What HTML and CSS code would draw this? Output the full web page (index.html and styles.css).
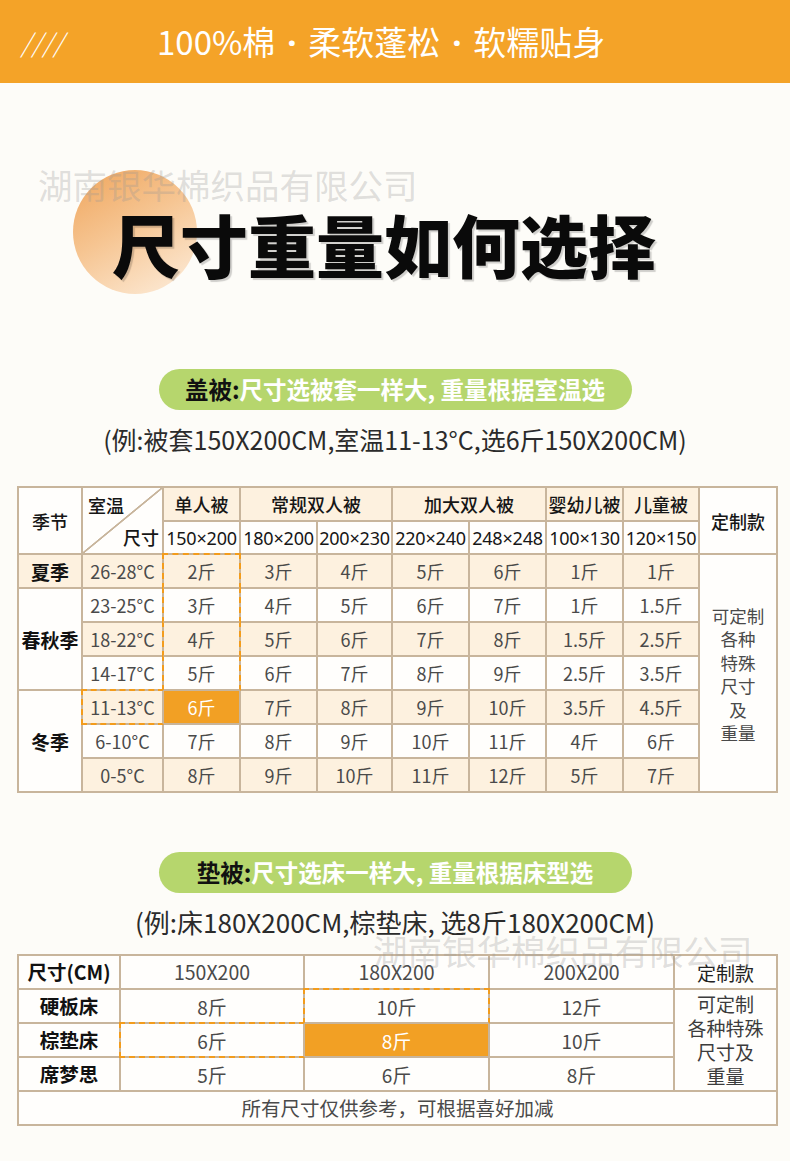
FILE: index.html
```html
<!DOCTYPE html>
<html lang="zh-CN">
<head>
<meta charset="utf-8">
<title>尺寸重量如何选择</title>
<link rel="stylesheet" href="styles.css">
</head>
<body>
<header class="topbar">
  <span class="slashes">////</span>
  <span class="slogan">100%棉<span class="dot">·</span>柔软蓬松<span class="dot">·</span>软糯贴身</span>
</header>

<section class="hero">
  <span class="blob"></span>
  <div class="wm wm1">湖南银华棉织品有限公司</div>
  <h1 class="title">尺寸重量如何选择</h1>
</section>

<section class="block block1">
  <div class="pill"><b>盖被:</b>尺寸选被套一样大, 重量根据室温选</div>
  <p class="example ex1">(例:被套150X200CM,室温11-13°C,选6斤150X200CM)</p>
  <table class="grid t1">
    <colgroup>
      <col class="w64"><col class="w81"><col class="w77"><col class="w77"><col class="w75">
      <col class="w77"><col class="w77"><col class="w77"><col class="w76"><col class="w78">
    </colgroup>
    <tr class="r34">
      <td rowspan="2" class="head">季节</td>
      <td rowspan="2" class="diag"><div class="diag-in"><span class="d-top">室温</span><span class="d-bot">尺寸</span></div></td>
      <td class="c head">单人被</td>
      <td colspan="2" class="c head">常规双人被</td>
      <td colspan="2" class="c head">加大双人被</td>
      <td class="c head">婴幼儿被</td>
      <td class="c head">儿童被</td>
      <td rowspan="2" class="head">定制款</td>
    </tr>
    <tr class="r33">
      <td class="size">150×200</td><td class="size">180×200</td><td class="size">200×230</td>
      <td class="size">220×240</td><td class="size">248×248</td><td class="size">100×130</td><td class="size">120×150</td>
    </tr>
    <tr class="r34 c">
      <td class="season">夏季</td><td>26-28°C</td><td class="hl hl-tlr">2斤</td><td>3斤</td><td>4斤</td><td>5斤</td><td>6斤</td><td>1斤</td><td>1斤</td>
      <td rowspan="7" class="custom">可定制<br>各种<br>特殊<br>尺寸<br>及<br>重量</td>
    </tr>
    <tr class="r34">
      <td rowspan="3" class="season">春秋季</td><td>23-25°C</td><td class="hl hl-lr">3斤</td><td>4斤</td><td>5斤</td><td>6斤</td><td>7斤</td><td>1斤</td><td>1.5斤</td>
    </tr>
    <tr class="r34 c">
      <td>18-22°C</td><td class="hl hl-lr">4斤</td><td>5斤</td><td>6斤</td><td>7斤</td><td>8斤</td><td>1.5斤</td><td>2.5斤</td>
    </tr>
    <tr class="r34">
      <td>14-17°C</td><td class="hl hl-lr">5斤</td><td>6斤</td><td>7斤</td><td>8斤</td><td>9斤</td><td>2.5斤</td><td>3.5斤</td>
    </tr>
    <tr class="r34 c">
      <td rowspan="3" class="season white">冬季</td><td class="hl hl-tlb">11-13°C</td><td class="hi">6斤</td><td>7斤</td><td>8斤</td><td>9斤</td><td>10斤</td><td>3.5斤</td><td>4.5斤</td>
    </tr>
    <tr class="r34">
      <td>6-10°C</td><td>7斤</td><td>8斤</td><td>9斤</td><td>10斤</td><td>11斤</td><td>4斤</td><td>6斤</td>
    </tr>
    <tr class="r34 c">
      <td>0-5°C</td><td>8斤</td><td>9斤</td><td>10斤</td><td>11斤</td><td>12斤</td><td>5斤</td><td>7斤</td>
    </tr>
  </table>
</section>

<section class="block block2">
  <div class="pill"><b>垫被:</b>尺寸选床一样大, 重量根据床型选</div>
  <p class="example ex2">(例:床180X200CM,棕垫床, 选8斤180X200CM)</p>
  <div class="wm wm2">湖南银华棉织品有限公司</div>
  <table class="grid t2">
    <colgroup>
      <col class="w102"><col class="w184"><col class="w185"><col class="w185"><col class="w103">
    </colgroup>
    <tr class="r34">
      <td class="label">尺寸(CM)</td><td class="size2">150X200</td><td class="size2">180X200</td><td class="size2">200X200</td><td class="dz">定制款</td>
    </tr>
    <tr class="r34">
      <td class="label">硬板床</td><td>8斤</td><td class="hl hl-tlr">10斤</td><td>12斤</td>
      <td rowspan="3" class="custom2">可定制<br>各种特殊<br>尺寸及<br>重量</td>
    </tr>
    <tr class="r34">
      <td class="label">棕垫床</td><td class="hl hl-tlb">6斤</td><td class="hi">8斤</td><td>10斤</td>
    </tr>
    <tr class="r34">
      <td class="label">席梦思</td><td>5斤</td><td>6斤</td><td>8斤</td>
    </tr>
    <tr class="r34">
      <td colspan="5" class="note">所有尺寸仅供参考，可根据喜好加减</td>
    </tr>
  </table>
</section>
</body>
</html>
```

FILE: styles.css
```css
* { box-sizing: border-box; }

body {
  margin: 0;
  width: 790px;
  height: 1161px;
  overflow: hidden;
  background: #fdfcf8;
  font-family: "Noto Sans CJK SC", "Noto Sans", sans-serif;
  color: #222;
}

/* ---------- top bar ---------- */
.topbar {
  height: 83px;
  background: #f4a328;
  display: flex;
  align-items: center;
  color: #fff;
}
.slashes {
  width: 157px;
  padding-left: 21px;
  font-size: 26px;
  font-weight: 300;
  font-style: italic;
  letter-spacing: 0.5px;
}
.slogan {
  font-size: 33px;
  font-weight: 400;
  line-height: 1;
  white-space: nowrap;
}
.dot {
  display: inline-block;
  width: 33px;
  text-align: center;
  font-family: "Noto Sans", sans-serif;
  font-weight: 700;
}

/* ---------- hero ---------- */
.hero {
  position: relative;
  height: 286px;
  padding-top: 127px;
  padding-left: 112px;
}
.wm {
  position: absolute;
  font-size: 34.5px;
  line-height: 1;
  font-weight: 400;
  color: rgba(150, 150, 150, 0.3);
  white-space: nowrap;
  z-index: 3;
}
.wm1 { left: 38px; top: 84px; }
.blob {
  position: absolute;
  left: 73px;
  top: 87px;
  width: 124px;
  height: 124px;
  border-radius: 50%;
  background: linear-gradient(150deg, #efa55c 0%, #f6c592 45%, #fdeedd 100%);
}
.title {
  position: relative;
  margin: 0;
  font-size: 68px;
  line-height: 68px;
  font-weight: 900;
  color: #0a0a0a;
  white-space: nowrap;
  text-shadow: 2px 2px 1px rgba(0, 0, 0, 0.18);
}

/* ---------- blocks ---------- */
.block { position: relative; }
.block2 { margin-top: 59px; }

.pill {
  width: 473px;
  height: 41px;
  margin: 0 auto;
  border-radius: 21px;
  background: #b6d66d;
  color: #fff;
  font-size: 23.5px;
  font-weight: 700;
  line-height: 41px;
  text-align: center;
  white-space: nowrap;
}
.pill b { color: #111; font-weight: 700; }

.example {
  margin: 14px 0 0;
  height: 30px;
  line-height: 30px;
  font-size: 25px;
  color: #2b2b2b;
  text-align: center;
  white-space: nowrap;
}
.ex1 { margin-bottom: 32px; }
.ex2 { margin-bottom: 17px; font-size: 26px; }

.wm2 { left: 373px; top: 81px; }

/* ---------- tables ---------- */
.grid {
  border-collapse: collapse;
  table-layout: fixed;
  margin-left: 17px;
  width: 759px;
}
.grid td {
  border: 2px solid #c8b59c;
  padding: 0;
  text-align: center;
  vertical-align: middle;
  background: #fffefc;
  color: #4a4a4a;
  font-size: 18px;
  line-height: 1;
  white-space: nowrap;
}
.r34 { height: 34px; }
.r33 { height: 33px; }

.w64 { width: 64px; } .w81 { width: 81px; } .w77 { width: 77px; } .w75 { width: 75px; }
.w76 { width: 76px; } .w78 { width: 78px; }
.w102 { width: 102px; } .w184 { width: 184px; } .w185 { width: 185px; } .w103 { width: 103px; }

.grid tr.c td, .grid td.c { background: #fdf1df; }
.grid tr.c td.white { background: #fffefc; }

.grid td.head { color: #161616; font-weight: 500; }
.grid td.size {
  color: #161616;
  font-size: 18px;
  letter-spacing: -0.2px;
  font-family: "Noto Sans", "Noto Sans CJK SC", sans-serif;
}
.grid td.season { color: #111; font-weight: 700; font-size: 19px; }

.grid td.diag {
  padding: 0;
  background: linear-gradient(to bottom right,
    transparent calc(50% - 1.2px), #c8b59c calc(50% - 0.6px),
    #c8b59c calc(50% + 0.6px), transparent calc(50% + 1.2px)), #fffefc;
}
.diag-in {
  height: 65px;
  display: flex;
  flex-direction: column;
  justify-content: space-between;
  padding: 6px 3px 5px 5px;
  color: #161616;
  font-weight: 500;
}
.d-top { align-self: flex-start; line-height: 22px; }
.d-bot { align-self: flex-end; line-height: 22px; }

.grid tr.c td.custom, .grid td.custom {
  background: #fffefc;
  font-size: 17.5px;
  line-height: 23.5px;
  color: #4a4a4a;
  padding-top: 2px;
}

.grid td.hi, .grid tr.c td.hi { background: #f2a024; color: #fff; }

.grid td.hl { position: relative; }
.grid td.hl::after {
  content: "";
  position: absolute;
  top: -2px; left: -2px; right: -2px; bottom: -2px;
  border: 2px dashed #f39c1c;
  z-index: 2;
  pointer-events: none;
}
.grid td.hl-tlr::after { border-bottom-color: transparent; }
.grid td.hl-lr::after { border-top-color: transparent; border-bottom-color: transparent; }
.grid td.hl-tlb::after { border-right-color: transparent; }

/* table 2 */
.t2 td { font-size: 19px; }
.grid td.label { color: #111; font-weight: 700; font-size: 19.5px; }
.grid td.size2 { font-size: 19.5px; color: #4a4a4a; }
.grid td.dz { color: #222; font-size: 19px; }
.grid td.custom2 {
  font-size: 19px;
  line-height: 24px;
  color: #3c3c3c;
}
.grid td.note { font-size: 19.5px; color: #4a4a4a; }
```
